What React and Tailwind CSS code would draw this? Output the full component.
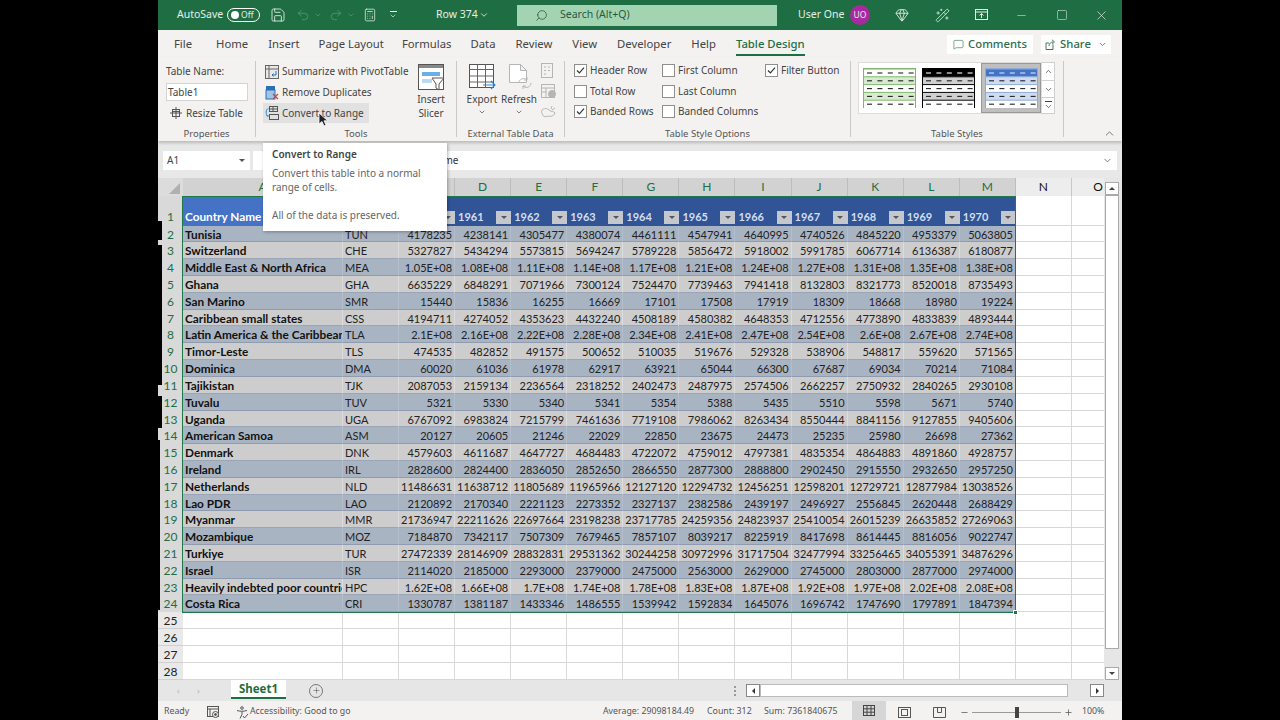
import { Calculator, ChevronDown, ChevronUp, Gem, Minus, MessageSquare, Plus, Redo2, Save, Search, Square, Undo2, WandSparkles, X } from "lucide-react";

const rows = [
  ["Tunisia", "TUN", "4178235", "4238141", "4305477", "4380074", "4461111", "4547941", "4640995", "4740526", "4845220", "4953379", "5063805"],
  ["Switzerland", "CHE", "5327827", "5434294", "5573815", "5694247", "5789228", "5856472", "5918002", "5991785", "6067714", "6136387", "6180877"],
  ["Middle East & North Africa", "MEA", "1.05E+08", "1.08E+08", "1.11E+08", "1.14E+08", "1.17E+08", "1.21E+08", "1.24E+08", "1.27E+08", "1.31E+08", "1.35E+08", "1.38E+08"],
  ["Ghana", "GHA", "6635229", "6848291", "7071966", "7300124", "7524470", "7739463", "7941418", "8132803", "8321773", "8520018", "8735493"],
  ["San Marino", "SMR", "15440", "15836", "16255", "16669", "17101", "17508", "17919", "18309", "18668", "18980", "19224"],
  ["Caribbean small states", "CSS", "4194711", "4274052", "4353623", "4432240", "4508189", "4580382", "4648353", "4712556", "4773890", "4833839", "4893444"],
  ["Latin America & the Caribbean", "TLA", "2.1E+08", "2.16E+08", "2.22E+08", "2.28E+08", "2.34E+08", "2.41E+08", "2.47E+08", "2.54E+08", "2.6E+08", "2.67E+08", "2.74E+08"],
  ["Timor-Leste", "TLS", "474535", "482852", "491575", "500652", "510035", "519676", "529328", "538906", "548817", "559620", "571565"],
  ["Dominica", "DMA", "60020", "61036", "61978", "62917", "63921", "65044", "66300", "67687", "69034", "70214", "71084"],
  ["Tajikistan", "TJK", "2087053", "2159134", "2236564", "2318252", "2402473", "2487975", "2574506", "2662257", "2750932", "2840265", "2930108"],
  ["Tuvalu", "TUV", "5321", "5330", "5340", "5341", "5354", "5388", "5435", "5510", "5598", "5671", "5740"],
  ["Uganda", "UGA", "6767092", "6983824", "7215799", "7461636", "7719108", "7986062", "8263434", "8550444", "8841156", "9127855", "9405606"],
  ["American Samoa", "ASM", "20127", "20605", "21246", "22029", "22850", "23675", "24473", "25235", "25980", "26698", "27362"],
  ["Denmark", "DNK", "4579603", "4611687", "4647727", "4684483", "4722072", "4759012", "4797381", "4835354", "4864883", "4891860", "4928757"],
  ["Ireland", "IRL", "2828600", "2824400", "2836050", "2852650", "2866550", "2877300", "2888800", "2902450", "2915550", "2932650", "2957250"],
  ["Netherlands", "NLD", "11486631", "11638712", "11805689", "11965966", "12127120", "12294732", "12456251", "12598201", "12729721", "12877984", "13038526"],
  ["Lao PDR", "LAO", "2120892", "2170340", "2221123", "2273352", "2327137", "2382586", "2439197", "2496927", "2556845", "2620448", "2688429"],
  ["Myanmar", "MMR", "21736947", "22211626", "22697664", "23198238", "23717785", "24259356", "24823937", "25410054", "26015239", "26635852", "27269063"],
  ["Mozambique", "MOZ", "7184870", "7342117", "7507309", "7679465", "7857107", "8039217", "8225919", "8417698", "8614445", "8816056", "9022747"],
  ["Turkiye", "TUR", "27472339", "28146909", "28832831", "29531362", "30244258", "30972996", "31717504", "32477994", "33256465", "34055391", "34876296"],
  ["Israel", "ISR", "2114020", "2185000", "2293000", "2379000", "2475000", "2563000", "2629000", "2745000", "2803000", "2877000", "2974000"],
  ["Heavily indebted poor countries", "HPC", "1.62E+08", "1.66E+08", "1.7E+08", "1.74E+08", "1.78E+08", "1.83E+08", "1.87E+08", "1.92E+08", "1.97E+08", "2.02E+08", "2.08E+08"],
  ["Costa Rica", "CRI", "1330787", "1381187", "1433346", "1486555", "1539942", "1592834", "1645076", "1696742", "1747690", "1797891", "1847394"],
];

const letters = ["A", "B", "C", "D", "E", "F", "G", "H", "I", "J", "K", "L", "M"];
// 1960 sits under the tooltip in the picture
const years = ["", "1961", "1962", "1963", "1964", "1965", "1966", "1967", "1968", "1969", "1970"];
const tabs = [
  { name: "File", cls: "" },
  { name: "Home", cls: "ml-[24px]" },
  { name: "Insert", cls: "ml-[20px]" },
  { name: "Page Layout", cls: "ml-[19px]" },
  { name: "Formulas", cls: "ml-[18px]" },
  { name: "Data", cls: "ml-[19px]" },
  { name: "Review", cls: "ml-[20px]" },
  { name: "View", cls: "ml-[20px]" },
  { name: "Developer", cls: "ml-[20px]" },
  { name: "Help", cls: "ml-[20px]" },
];

function Check({ on, label, width }) {
  return (
    <div className="flex items-center gap-[3px] h-[20.5px]" style={{ width }}>
      <span className="w-[13px] h-[13px] border border-[#8f8f8f] bg-white flex items-center justify-center">
        {on && (
          <svg width="9" height="9" viewBox="0 0 9 9" fill="none" stroke="#333" strokeWidth="1.2">
            <path d="M1 4.5l2.4 2.4L8 1.6" />
          </svg>
        )}
      </span>
      <span className="whitespace-nowrap">{label}</span>
    </div>
  );
}

function FilterBtn() {
  return (
    <span className="w-[15px] h-[13px] bg-[#c4c7cc] flex items-center justify-center shrink-0">
      <span className="w-0 h-0 border-x-[3px] border-x-transparent border-t-[3px] border-t-[#555]"></span>
    </span>
  );
}

// table style thumbnail from the gallery
function StyleThumb({ head, band, line, outer }) {
  return (
    <svg width="53" height="40" viewBox="0 0 53 40">
      <rect x="0.5" y="0.5" width="52" height="39" fill="#fff" stroke={outer} />
      {[0, 1, 2, 3, 4].map((r) => (
        <g key={r}>
          <rect x="1" y={1 + r * 7.8} width="51" height="7.8" fill={r === 0 ? head : r % 2 ? band : "#fff"} />
          <line x1="0" x2="53" y1={1 + r * 7.8} y2={1 + r * 7.8} stroke={line} />
          {[0, 1, 2, 3, 4].map((c) => (
            <line key={c} x1={4 + c * 10.4} x2={9 + c * 10.4} y1={5 + r * 7.8} y2={5 + r * 7.8} stroke={r === 0 && head === "#000" ? "#fff" : r === 0 && head === "#4472c4" ? "#dbe5f5" : "#222"} strokeWidth="1.1" />
          ))}
        </g>
      ))}
    </svg>
  );
}

function Group({ label, width, children }) {
  return (
    <div className="flex flex-col h-[76px] mt-[4px] border-r border-[#c8c8c8] shrink-0" style={{ width }}>
      <div className="h-[66px] shrink-0 flex">{children}</div>
      <div className="h-[14px] shrink-0 text-center text-[9.5px] leading-[14px] text-[#555]">{label}</div>
    </div>
  );
}

function GridCell({ children, className }) {
  return <div className={"overflow-hidden whitespace-nowrap leading-[17px] " + className}>{children}</div>;
}

export default function App() {
  return (
    <div className="w-[1280px] h-[720px] bg-black flex justify-center overflow-hidden font-['Noto_Sans',sans-serif]">
      <div className="relative w-[964px] h-[720px] flex flex-col bg-[#f3f2f1] text-[#444]">
        {/* Title bar */}
        <div className="h-[30px] bg-[#1f6e43] text-[#e4efe8] flex items-center text-[10.5px] shrink-0">
          <span className="ml-[19px] w-[50px]">AutoSave</span>
          <span className="w-[33px] h-[14px] rounded-full border border-white flex items-center pl-[3px] gap-[2px] text-[8.5px]">
            <span className="w-[8px] h-[8px] rounded-full bg-white"></span>Off
          </span>
          <Save size={16} strokeWidth={1.3} className="ml-[10px]" />
          <Undo2 size={14} strokeWidth={1.3} className="ml-[10px] text-[#5f9a78]" />
          <ChevronDown size={8} className="ml-[4px] text-[#5f9a78]" />
          <Redo2 size={14} strokeWidth={1.3} className="ml-[7px] text-[#5f9a78]" />
          <ChevronDown size={8} className="ml-[4px] text-[#5f9a78]" />
          <Calculator size={14} strokeWidth={1.3} className="ml-[8px]" />
          <span className="ml-[12px] flex flex-col items-center w-[8px]">
            <span className="w-[7px] h-px bg-white"></span>
            <ChevronDown size={8} />
          </span>
          <span className="ml-[39px] w-[41px] whitespace-nowrap">Row 374</span>
          <ChevronDown size={10} className="ml-[2px]" />
          <div className="ml-[28px] w-[260px] h-[21px] bg-[#a3d4b2] text-[#2a5a3e] flex items-center">
            <Search size={13} strokeWidth={1.4} className="ml-[18px] -scale-x-100" />
            <span className="ml-[12px]">Search (Alt+Q)</span>
          </div>
          <span className="ml-[21px] w-[43px] whitespace-nowrap">User One</span>
          <span className="ml-[9px] w-[20px] h-[20px] rounded-full bg-[#a92a9f] text-[8.5px] flex items-center justify-center">UO</span>
          <Gem size={14} strokeWidth={1.5} className="ml-[25px]" />
          <WandSparkles size={15} strokeWidth={1.3} className="ml-[26px]" />
          <svg width="13" height="12" viewBox="0 0 13 12" fill="none" stroke="currentColor" className="ml-[25px]">
            <rect x="0.5" y="0.5" width="12" height="10" />
            <path d="M0.5 3h12M6.5 9V4.5M4.5 6.5l2-2 2 2" />
          </svg>
          <Minus size={13} strokeWidth={1} className="ml-[27px]" />
          <Square size={12} strokeWidth={1.1} className="ml-[28px]" />
          <X size={15} strokeWidth={1.1} className="ml-[26px]" />
        </div>

        {/* Tabs */}
        <div className="h-[27px] pt-[2px] flex items-center text-[11.3px] text-[#444] shrink-0">
          <div className="flex ml-[16px]">
            {tabs.map((t) => (
              <span key={t.name} className={"whitespace-nowrap " + t.cls}>{t.name}</span>
            ))}
            <span className="relative ml-[20px] whitespace-nowrap text-[#1f6e43] font-medium">
              Table Design
              <span className="absolute left-0 right-0 -bottom-[3px] h-[2px] bg-[#1f6e43]"></span>
            </span>
          </div>
          <div className="ml-auto mr-[11px] flex gap-[8px] font-medium text-[#2f6b4c] text-[11.3px]">
            <span className="w-[86px] h-[19px] bg-white flex items-center justify-center gap-[4px]">
              <MessageSquare size={11} strokeWidth={1.3} />
              Comments
            </span>
            <span className="w-[70px] h-[19px] bg-white flex items-center justify-center gap-[4px]">
              <svg width="11" height="11" viewBox="0 0 11 11" fill="none" stroke="currentColor" strokeWidth="0.9">
                <path d="M8 5.5v5H1V4h3M4 7c0-2.5 2-4 4-4M7 .8L9.5 3 7 5.2" />
              </svg>
              Share
              <ChevronDown size={9} className="ml-[3px]" />
            </span>
          </div>
        </div>

        {/* Ribbon */}
        <div className="h-[84px] flex text-[10px] shrink-0 shadow-[0_2px_3px_rgba(0,0,0,0.2)] z-10 relative">
          <Group label="Properties" width={98}>
            <div className="pl-[8px] pt-[3px] flex flex-col">
              <span className="h-[15px] leading-[15px]">Table Name:</span>
              <span className="mt-[4px] w-[82px] h-[18px] bg-white border border-[#d4d4d4] px-[1px] leading-[16px]">Table1</span>
              <div className="mt-[2px] flex items-center gap-[4px] pl-[4px] h-[20px]">
                <svg width="12" height="12" viewBox="0 0 12 12" fill="none" stroke="#555">
                  <rect x="2.5" y="2.5" width="7" height="7" />
                  <path d="M6 0v12M0 6h12M2.5 4.5h7" />
                </svg>
                Resize Table
              </div>
            </div>
          </Group>
          <Group label="Tools" width={201}>
            <div className="flex flex-col pl-[7px] w-[157px]">
              <div className="h-[21px] flex items-center gap-[3px] pl-[2px]">
                <svg width="14" height="14" viewBox="0 0 14 14" fill="none">
                  <rect x="0.5" y="0.5" width="13" height="13" fill="#e8e8e8" stroke="#666" />
                  <path d="M4 .5v13M.5 4h13" stroke="#666" />
                  <path d="M11 6v4H7M8.5 8.5L7 10l1.5 1.5" stroke="#2a6fb5" />
                </svg>
                <span className="whitespace-nowrap">Summarize with PivotTable</span>
              </div>
              <div className="h-[21px] flex items-center gap-[3px] pl-[2px]">
                <svg width="14" height="15" viewBox="0 0 14 15" fill="none">
                  <rect x="1" y="1" width="9" height="4" fill="#2a6fb5" />
                  <rect x="1" y="5" width="9" height="9" fill="#9ec4e6" stroke="#2a6fb5" />
                  <path d="M8 9l5 5M13 9l-5 5" stroke="#d0433a" strokeWidth="1.2" />
                </svg>
                <span className="whitespace-nowrap">Remove Duplicates</span>
              </div>
              <div className="h-[20px] w-[106px] bg-[#e1e1e1] flex items-center gap-[3px] pl-[2px]">
                <svg width="14" height="14" viewBox="0 0 14 14" fill="none">
                  <rect x="4.5" y="0.5" width="8" height="5" stroke="#555" />
                  <path d="M4.5 3h8M8 .5v5" stroke="#555" />
                  <rect x="4.5" y="8.5" width="9" height="5" stroke="#555" />
                  <path d="M3.5 2.5C.5 3 .5 9 3 10.5M1.5 9l1.5 1.5L4.5 9" stroke="#2a87c8" />
                </svg>
                <span className="whitespace-nowrap">Convert to Range</span>
              </div>
            </div>
            <div className="flex flex-col items-center w-[36px] pt-[3px] leading-[14px]">
              <svg width="27" height="27" viewBox="0 0 27 27" fill="none">
                <rect x="0.5" y="0.5" width="25" height="25" fill="#fff" stroke="#555" />
                <rect x="1" y="1" width="24" height="3" fill="#888" />
                <rect x="4" y="8" width="18" height="4" fill="#6aaee8" />
                <rect x="4" y="15" width="10" height="4" fill="#bcd9f2" />
                <path d="M14 14h12l-5 6v6l-3-2v-4z" fill="#fff" stroke="#555" />
              </svg>
              <span className="mt-[1px]">Insert</span>
              <span>Slicer</span>
            </div>
          </Group>
          <Group label="External Table Data" width={108}>
            <div className="flex flex-col items-center w-[44px] pl-[6px] pt-[3px] leading-[14px]">
              <svg width="27" height="27" viewBox="0 0 27 27" fill="none">
                <rect x="0.5" y="0.5" width="24" height="23" fill="#fff" stroke="#555" />
                <path d="M.5 5.5h24M.5 12h24M.5 18h24M8.5.5v23M16.5.5v23" stroke="#666" />
                <path d="M14 21h12M22 17l4 4-4 4" stroke="#2a87c8" strokeWidth="1.1" />
              </svg>
              <span className="mt-[1px]">Export</span>
              <ChevronDown size={8} className="mt-[2px]" />
            </div>
            <div className="flex flex-col items-center w-[36px] pt-[3px] leading-[14px]">
              <svg width="27" height="27" viewBox="0 0 27 27" fill="none" stroke="#b5b5b5">
                <path d="M3.5.5h11l6 6v12h-17zM14.5.5v6h6" fill="#fff" />
                <path d="M13 19c0-4 5-6 8-3M25 19c0 4-5 6-8 3M21 13v3h-3M17 25v-3h3" />
              </svg>
              <span className="mt-[1px]">Refresh</span>
              <ChevronDown size={8} className="mt-[2px]" />
            </div>
            <div className="flex flex-col gap-[6px] pl-[4px] pt-[2px]">
              <svg width="12" height="15" viewBox="0 0 12 15" fill="none" stroke="#b5b5b5"><rect x="0.5" y="0.5" width="11" height="14" /><path d="M3 4h2M7 4h2M3 7.5h2M7 7.5h2M3 11h2" /></svg>
              <svg width="15" height="15" viewBox="0 0 15 15" fill="none" stroke="#b5b5b5"><rect x="0.5" y="0.5" width="13" height="13" /><path d="M.5 4h13M5 4v9M.5 8h5" /><circle cx="11" cy="10" r="3.5" fill="#b5b5b5" /></svg>
              <svg width="15" height="15" viewBox="0 0 15 15" fill="none" stroke="#b5b5b5"><path d="M1 5c2-2 5-2 7 0s5 1 6 3c-1 3-5 4-7 3-2 1-5 1-5-1-1-1-2-3-1-5zM11 1l-1 3M14 3l-3 2" /></svg>
            </div>
          </Group>
          <Group label="Table Style Options" width={286}>
            <div className="flex pl-[9px] -mt-[0.5px]">
              <div className="flex flex-col">
                <Check on label="Header Row" width={88} />
                <Check label="Total Row" width={88} />
                <Check on label="Banded Rows" width={88} />
              </div>
              <div className="flex flex-col">
                <Check label="First Column" width={103} />
                <Check label="Last Column" width={103} />
                <Check label="Banded Columns" width={103} />
              </div>
              <Check on label="Filter Button" width={80} />
            </div>
          </Group>
          <Group label="Table Styles" width={213}>
            <div className="flex items-start pl-[7px] pt-[1px]">
              <div className="w-[184px] h-[52px] bg-white border border-[#dcdcdc] flex items-center pl-[4px] gap-[6px]">
                <StyleThumb head="#fff" band="#d9ead3" line="#7fb86a" outer="#7fb86a" />
                <StyleThumb head="#000" band="#d0d0d0" line="#000" outer="#000" />
                <span className="w-[60px] h-[50px] bg-[#bfbfbf] border border-[#999] flex items-center justify-center">
                  <StyleThumb head="#4472c4" band="#cfdcf0" line="#8eaadb" outer="#8eaadb" />
                </span>
              </div>
              <div className="w-[13px] h-[52px] bg-white border border-l-0 border-[#cfcfcf] flex flex-col items-center justify-between text-[#444]">
                <span className="h-[18px] flex items-center border-b border-[#cfcfcf] w-full justify-center"><ChevronUp size={9} strokeWidth={2} /></span>
                <span className="h-[17px] flex items-center border-b border-[#cfcfcf] w-full justify-center"><ChevronDown size={9} strokeWidth={2} /></span>
                <span className="h-[15px] flex flex-col items-center justify-center">
                  <span className="w-[7px] h-px bg-[#444]"></span>
                  <ChevronDown size={9} strokeWidth={2} />
                </span>
              </div>
            </div>
          </Group>
          <div className="flex-1 flex items-end justify-end pr-[6px] pb-[1px]">
            <ChevronUp size={13} strokeWidth={1.3} />
          </div>
        </div>

        {/* Formula bar */}
        <div className="h-[37px] pt-[2px] bg-[#e8e8e8] flex items-center pl-[5px] shrink-0 text-[10px]">
          <div className="w-[87px] h-[19px] bg-white flex items-center justify-between px-[4px]">
            A1
            <span className="w-0 h-0 mr-[1px] border-x-[3px] border-x-transparent border-t-[3px] border-t-[#555]"></span>
          </div>
          <div className="ml-[3px] w-[864px] h-[19px] bg-white flex items-center justify-between pl-[137px] pr-[4px] text-[#333]">
            <span>Country Name</span>
            <ChevronDown size={11} strokeWidth={1.6} className="text-[#555]" />
          </div>
        </div>

        {/* Sheet */}
        <div className="flex shrink-0 h-[502px]">
          <div className="relative grid grid-cols-[25px_160px_56px_repeat(11,56.09px)_56px_32px] grid-rows-[18px_29.6px_repeat(27,16.82px)] w-[946px] h-[502px] overflow-hidden bg-white font-['Lato',sans-serif] text-[11px] text-[#111]">
            <div className="bg-[#dcdcdc] flex items-end justify-end pr-[3px] pb-[2px]">
              <span className="w-0 h-0 border-l-[11px] border-l-transparent border-b-[11px] border-b-[#b0b0b0]"></span>
            </div>
            {letters.map((l) => (
              <GridCell key={l} className="bg-[#d2d2d2] border-r border-[#bdbdbd] text-center text-[#1f6e43] text-[12px] leading-[18px]">{l}</GridCell>
            ))}
            <GridCell className="bg-[#ededed] border-r border-[#c8c8c8] text-center text-[12px] leading-[18px]">N</GridCell>
            <GridCell className="bg-[#ededed] text-right pr-[1px] text-[12px] leading-[18px]">O</GridCell>

            {/* Header row */}
            <GridCell className="bg-[#d9d9d9] text-[#1f6e43] text-center text-[12px] flex items-end justify-center pb-[1px]">1</GridCell>
            <GridCell className="bg-[#4472c4] text-white font-bold text-[11.8px] flex items-end pl-[2px] pb-[1px]">Country Name</GridCell>
            <GridCell className="bg-[#305496]"></GridCell>
            {years.map((y, i) => (
              <GridCell key={i} className="bg-[#305496] text-[#d4deee] font-bold flex items-end justify-between pl-[3px] pb-[1px]">
                {y || <span></span>}
                <span className="mb-[1px]"><FilterBtn /></span>
              </GridCell>
            ))}
            <GridCell className="border-r border-b border-[#d8d8d8]"></GridCell>
            <GridCell className="border-b border-[#d8d8d8]"></GridCell>

            {/* Data rows */}
            {rows.map((r, i) =>
              [
                <GridCell key={"h" + i} className="bg-[#d9d9d9] text-[#1f6e43] text-center text-[12px]">{i + 2}</GridCell>,
                ...r.map((v, j) => (
                  <GridCell
                    key={i + "-" + j}
                    className={
                      (i % 2 === 0 ? "bg-[#a9b4c3] border-b-[#8e9bb0] border-r-[#b3bdcb] " : "bg-[#cdcdcd] border-b-[#9aa6b7] border-r-[#dcdcdc] ") +
                      "border-r border-b " +
                      (j === 0 ? "font-bold text-[11.8px] pl-[2px]" : j === 1 ? "pl-[2px] text-[#222]" : "text-right pr-[2px] text-[#222]")
                    }
                  >
                    {v}
                  </GridCell>
                )),
                <GridCell key={"n" + i} className="border-r border-b border-[#d8d8d8]"></GridCell>,
                <GridCell key={"o" + i} className="border-b border-[#d8d8d8]"></GridCell>,
              ]
            )}

            {/* Empty rows */}
            {[25, 26, 27, 28].map((n) => [
              <GridCell key={"h" + n} className="bg-[#e9e9e9] border-b border-[#d0d0d0] text-center text-[12px] text-[#222]">{n}</GridCell>,
              ...Array.from({ length: 15 }).map((_, j) => (
                <GridCell key={n + "-" + j} className={"border-b border-[#d8d8d8] " + (j < 14 ? "border-r" : "")}></GridCell>
              )),
            ])}

            {/* table selection border */}
            <div className="absolute left-[24px] top-[18px] w-[834px] h-[417px] border border-[#1f7a4a] pointer-events-none"></div>
            <div className="absolute left-[855px] top-[432px] w-[5px] h-[5px] bg-[#1f7a4a] border border-white pointer-events-none"></div>
          </div>

          {/* Vertical scrollbar */}
          <div className="flex-1 flex flex-col items-start bg-[#e6e6e6] pt-[4px] pl-[1px]">
            <span className="w-[14px] h-[13px] bg-white border border-[#aaa] flex items-center justify-center">
              <span className="w-0 h-0 border-x-[3px] border-x-transparent border-b-[3px] border-b-[#444]"></span>
            </span>
            <span className="w-[14px] h-[456px] bg-white border border-[#aaa]"></span>
            <span className="mt-[18px] w-[14px] h-[13px] bg-white border border-[#aaa] flex items-center justify-center">
              <span className="w-0 h-0 border-x-[3px] border-x-transparent border-t-[3px] border-t-[#444]"></span>
            </span>
          </div>
        </div>

        {/* Sheet tabs */}
        <div className="h-[21px] bg-[#e6e6e6] flex items-center shrink-0 text-[11px]">
          <span className="ml-[19px] text-[#b5b5b5] text-[9px] w-[20px]">‹</span>
          <span className="text-[#b5b5b5] text-[9px] w-[34px]">›</span>
          <span className="w-[55px] h-[19px] self-start bg-white border-b-2 border-[#1f6e43] text-[#1f6e43] font-bold text-center text-[11.5px] leading-[17px]">Sheet1</span>
          <span className="ml-[23px] w-[14px] h-[14px] rounded-full border border-[#777] flex items-center justify-center">
            <Plus size={9} strokeWidth={1.3} />
          </span>
          <span className="ml-[411px] w-[2px] h-[10px] border-l-2 border-dotted border-[#999]"></span>
          <span className="ml-[10px] w-[14px] h-[13px] bg-white border border-[#888] flex items-center justify-center">
            <span className="w-0 h-0 border-y-[3px] border-y-transparent border-r-[3px] border-r-[#333]"></span>
          </span>
          <span className="w-[308px] h-[13px] bg-white border border-[#bbb]"></span>
          <span className="ml-[22px] w-[14px] h-[13px] bg-white border border-[#888] flex items-center justify-center">
            <span className="w-0 h-0 border-y-[3px] border-y-transparent border-l-[3px] border-l-[#333]"></span>
          </span>
        </div>

        {/* Status bar */}
        <div className="flex-1 bg-[#f3f2f1] flex items-center pt-[3px] text-[8.8px] text-[#555]">
          <span className="ml-[6px] w-[43px]">Ready</span>
          <svg width="13" height="13" viewBox="0 0 13 13" fill="none" stroke="#555">
            <rect x="0.5" y="0.5" width="11" height="10" />
            <path d="M.5 3h11M3 3v7" />
            <circle cx="8.5" cy="8.5" r="3" fill="#f3f2f1" />
            <circle cx="8.5" cy="8.5" r="1" fill="#555" />
          </svg>
          <svg width="13" height="13" viewBox="0 0 13 13" fill="none" stroke="#555" className="ml-[16px]">
            <circle cx="6" cy="2" r="1.3" />
            <path d="M1 4.5c3 1 6 1 10 0M6 5.5v3M6 8.5l-2 4M7 10l1.5 2 3.5-4" />
          </svg>
          <span className="ml-[1px] w-[353px] whitespace-nowrap">Accessibility: Good to go</span>
          <span className="w-[104px] whitespace-nowrap">Average: 29098184.49</span>
          <span className="w-[57px] whitespace-nowrap">Count: 312</span>
          <span className="w-[88px] whitespace-nowrap">Sum: 7361840675</span>
          <span className="w-[34px] h-[19px] -mt-[3px] bg-[#d6d6d6] flex items-center justify-center">
            <svg width="12" height="11" viewBox="0 0 12 11" fill="none" stroke="#444"><rect x="0.5" y="0.5" width="11" height="10" /><path d="M4 .5v10M8 .5v10M.5 3.8h11M.5 7.2h11" /></svg>
          </span>
          <svg width="13" height="11" viewBox="0 0 13 11" fill="none" stroke="#555" className="ml-[12px]"><rect x="0.5" y="0.5" width="12" height="10" /><rect x="3.5" y="2.5" width="6" height="6" /></svg>
          <svg width="13" height="11" viewBox="0 0 13 11" fill="none" stroke="#555" className="ml-[22px]"><path d="M.5 .5h12v10h-12zM4.5 .5v5h4v-5" /></svg>
          <Minus size={9} className="ml-[14px]" />
          <span className="relative ml-[3px] w-[89px] h-px bg-[#999]">
            <span className="absolute left-[43px] -top-[5px] w-[4px] h-[11px] bg-[#444]"></span>
          </span>
          <Plus size={9} className="ml-[3px]" />
          <span className="ml-[9px]">100%</span>
        </div>

        {/* Tooltip */}
        <div className="absolute left-[105px] top-[143px] w-[184px] h-[88px] bg-white shadow-[1px_1px_3px_rgba(0,0,0,0.3)] z-20 pl-[9px] pt-[4px] text-[10px] leading-[14px] text-[#666]">
          <div className="font-semibold text-[#444] mb-[5px]">Convert to Range</div>
          <div>Convert this table into a normal</div>
          <div>range of cells.</div>
          <div className="mt-[14px]">All of the data is preserved.</div>
        </div>

        {/* Mouse pointer */}
        <svg width="11" height="15" viewBox="0 0 11 15" className="absolute left-[160px] top-[112px] z-30">
          <path d="M1 1v11l3-2.5 2 4.5 2-1-2-4.2h3.8z" fill="#222" stroke="#fff" strokeWidth="0.8" />
        </svg>

        {/* recording artefact on the left edge */}
        <div className="absolute left-0 top-[221px] w-[4px] h-[19px] bg-black z-20"></div>
        <div className="absolute left-0 top-[245px] w-[4px] h-[140px] bg-black z-20"></div>
        <div className="absolute left-0 top-[396px] w-[4px] h-[32px] bg-black z-20"></div>
        <div className="absolute left-0 top-[440px] w-[2px] h-[170px] bg-black z-20"></div>
      </div>
    </div>
  );
}
